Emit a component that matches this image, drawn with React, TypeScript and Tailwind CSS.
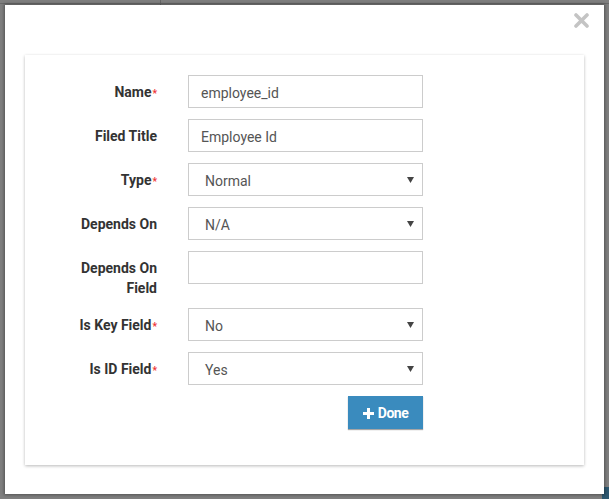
import React from "react";

type Field = {
  label: string;
  required?: boolean;
  kind: "input" | "select";
  value: string;
};

const fields: Field[] = [
  { label: "Name", required: true, kind: "input", value: "employee_id" },
  { label: "Filed Title", kind: "input", value: "Employee Id" },
  { label: "Type", required: true, kind: "select", value: "Normal" },
  { label: "Depends On", kind: "select", value: "N/A" },
  { label: "Depends On Field", kind: "input", value: "" },
  { label: "Is Key Field", required: true, kind: "select", value: "No" },
  { label: "Is ID Field", required: true, kind: "select", value: "Yes" },
];

function Caret() {
  return (
    <svg width="7" height="6" viewBox="0 0 7 6" className="shrink-0">
      <polygon points="0,0 7,0 3.5,6" fill="#444" />
    </svg>
  );
}

function Row({ field }: { field: Field }) {
  return (
    <div className="mb-[11px] flex items-start">
      <label className="-mb-[1px] ml-[32px] h-fit w-[100px] pt-[7px] text-right text-[14px] font-bold leading-[20px] text-[#333]">
        {field.label}
        {field.required && (
          <span className="ml-[1px] text-[10px] font-bold text-[#e33]">*</span>
        )}
      </label>
      <div className="ml-[31px] w-[235px]">
        {field.kind === "input" ? (
          <div className="flex h-[33px] items-center border border-[#ccc] bg-white px-[12px] pt-[3px] text-[14px] text-[#555]">
            {field.value}
          </div>
        ) : (
          <div className="flex h-[33px] items-center justify-between border border-[#ccc] bg-white pl-[16px] pr-[8px] pt-[3px] text-[14px] text-[#555]">
            <span>{field.value}</span>
            <span className="-mt-[3px]">
              <Caret />
            </span>
          </div>
        )}
      </div>
    </div>
  );
}

export default function App() {
  return (
    <div className="relative h-[499px] w-[609px] overflow-hidden bg-[#7f7f7f] font-['Roboto',sans-serif]">
      {/* page behind the overlay */}
      <div className="absolute left-0 top-0 h-[4px] w-full border-b border-[#6a6a6a]" />
      <div className="absolute left-[160px] top-0 h-[5px] w-px bg-[#666]" />
      <div className="absolute bottom-0 right-0 h-[12px] w-[7px] bg-[#2d5870]" />

      <div className="relative ml-[5px] mt-[5px] h-[489px] w-[599px] bg-white shadow-[0_0_3px_1px_rgba(0,0,0,0.35)]">
        <div className="flex h-[50px] justify-end pr-[15px] pt-[8px]">
          <button className="h-[15px] w-[15px]">
            <svg width="15" height="15" viewBox="0 0 15 15">
              <path d="M2 2 L13 13 M13 2 L2 13" stroke="#c4c4c4" strokeWidth="3.6" strokeLinecap="round" />
            </svg>
          </button>
        </div>

        <div className="mx-[20px] h-[410px] bg-white pt-[20px] shadow-[0_1px_3px_rgba(0,0,0,0.28)]">
          {fields.map((f) => (
            <Row key={f.label} field={f} />
          ))}
          <div className="ml-[163px] flex w-[235px] justify-end">
            <button className="flex h-[33px] w-[75px] items-center justify-center gap-[4px] bg-[#3a8bbe] pt-[1px] text-[14px] font-bold tracking-[-0.5px] text-white shadow-[0_1px_1px_rgba(0,0,0,0.35)]">
              <svg width="11" height="11" viewBox="0 0 11 11">
                <rect x="4" y="0" width="3" height="11" fill="#fff" />
                <rect x="0" y="4" width="11" height="3" fill="#fff" />
              </svg>
              Done
            </button>
          </div>
        </div>
      </div>
    </div>
  );
}
